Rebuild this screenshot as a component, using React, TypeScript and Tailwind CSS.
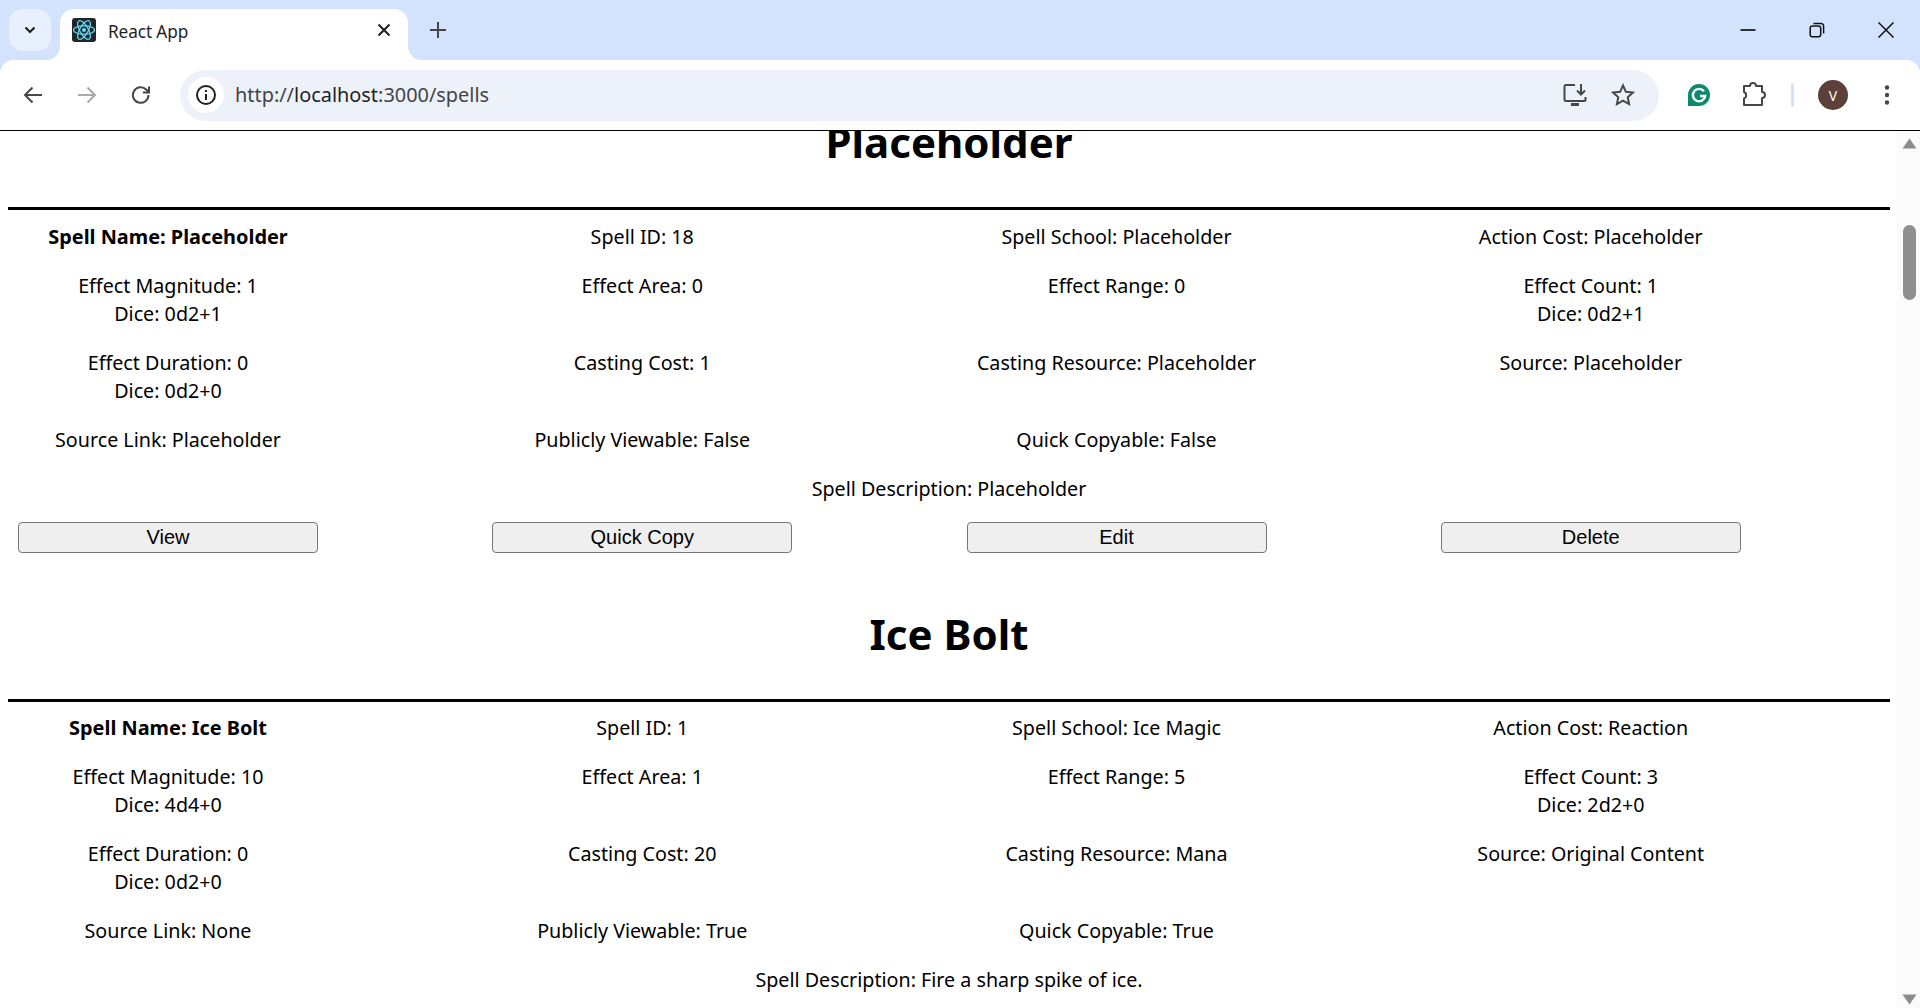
const spells = [
  {
    title: "Placeholder",
    rows: [
      [["Spell Name: Placeholder"], ["Spell ID: 18"], ["Spell School: Placeholder"], ["Action Cost: Placeholder"]],
      [["Effect Magnitude: 1", "Dice: 0d2+1"], ["Effect Area: 0"], ["Effect Range: 0"], ["Effect Count: 1", "Dice: 0d2+1"]],
      [["Effect Duration: 0", "Dice: 0d2+0"], ["Casting Cost: 1"], ["Casting Resource: Placeholder"], ["Source: Placeholder"]],
      [["Source Link: Placeholder"], ["Publicly Viewable: False"], ["Quick Copyable: False"], []],
    ],
    description: "Spell Description: Placeholder",
  },
  {
    title: "Ice Bolt",
    rows: [
      [["Spell Name: Ice Bolt"], ["Spell ID: 1"], ["Spell School: Ice Magic"], ["Action Cost: Reaction"]],
      [["Effect Magnitude: 10", "Dice: 4d4+0"], ["Effect Area: 1"], ["Effect Range: 5"], ["Effect Count: 3", "Dice: 2d2+0"]],
      [["Effect Duration: 0", "Dice: 0d2+0"], ["Casting Cost: 20"], ["Casting Resource: Mana"], ["Source: Original Content"]],
      [["Source Link: None"], ["Publicly Viewable: True"], ["Quick Copyable: True"], []],
    ],
    description: "Spell Description: Fire a sharp spike of ice.",
  },
];

function Spell({ spell }: { spell: (typeof spells)[number] }) {
  return (
    <section>
      <h1 className="text-center text-[42px] leading-[53px] font-bold mb-[39px] mr-[7px]">{spell.title}</h1>
      <div className="h-[3px] bg-black mr-[7px]" />
      <div className="mt-[12.5px] flex flex-col gap-[21px]">
        {spell.rows.map((row, r) => (
          <div key={r} className="grid grid-cols-[repeat(4,320px)] gap-x-[154.25px]">
            {row.map((lines, c) => (
              <div key={c} className={`text-center ${r === 0 && c === 0 ? "font-bold text-[19.9px]" : ""}`}>
                {lines.map((l) => (
                  <div key={l}>{l}</div>
                ))}
              </div>
            ))}
          </div>
        ))}
        <div className="text-center mr-[7px]">{spell.description}</div>
      </div>
      <div className="mt-[19.5px] mb-[53.7px] grid grid-cols-[repeat(4,320px)] gap-x-[154.25px]">
        {["View", "Quick Copy", "Edit", "Delete"].map((b) => (
          <div key={b} className="flex justify-center">
            <button className="w-[300px] h-[31px] pb-[2px] bg-[#efefef] border border-[#767676] rounded-[4px] text-[20px] leading-[26px] font-['Liberation_Sans',Arial,sans-serif]">
              {b}
            </button>
          </div>
        ))}
      </div>
    </section>
  );
}

function ReactFavicon() {
  return (
    <svg width="24" height="24" viewBox="0 0 24 24" className="shrink-0">
      <rect width="24" height="24" rx="3" fill="#222629" />
      <g fill="none" stroke="#61dafb" strokeWidth="1.2">
        <ellipse cx="12" cy="12" rx="10.5" ry="4.2" />
        <ellipse cx="12" cy="12" rx="10.5" ry="4.2" transform="rotate(60 12 12)" />
        <ellipse cx="12" cy="12" rx="10.5" ry="4.2" transform="rotate(120 12 12)" />
      </g>
      <circle cx="12" cy="12" r="2" fill="#61dafb" />
    </svg>
  );
}

function Chrome() {
  return (
    <header className="shrink-0 bg-[#d3e3fd] border-b border-black font-['Open_Sans',sans-serif]">
      <div className="h-[60px] flex items-end pl-[9px]">
        <div className="w-[42px] h-[42px] mb-[9px] rounded-[14px] bg-[#e9f0fd] flex items-center justify-center">
          <svg width="16" height="16" viewBox="0 0 16 16" fill="none" stroke="#1f1f1f" strokeWidth="2.2">
            <path d="M3.5 5.5 8 10l4.5-4.5" />
          </svg>
        </div>
        <div className="relative ml-[9px] w-[348px] h-[51px] bg-white rounded-t-[14px] flex items-center pl-[12px] pb-[9px]">
          <svg width="14" height="14" viewBox="0 0 14 14" className="absolute -left-[14px] bottom-0">
            <path d="M14 0v14H0C8 14 14 8 14 0z" fill="#fff" />
          </svg>
          <svg width="14" height="14" viewBox="0 0 14 14" className="absolute -right-[14px] bottom-0">
            <path d="M0 0v14h14C6 14 0 8 0 0z" fill="#fff" />
          </svg>
          <ReactFavicon />
          <span className="ml-[12px] text-[17.2px] text-[#1f1f1f] font-['Noto_Sans',sans-serif] tracking-[-0.1px] relative top-[2px]">React App</span>
          <svg width="14" height="14" viewBox="0 0 14 14" className="absolute right-[17px] top-[14px]" stroke="#1f1f1f" strokeWidth="2" fill="none">
            <path d="M1.5 1.5l11 11M12.5 1.5l-11 11" />
          </svg>
        </div>
        <svg width="16" height="16" viewBox="0 0 16 16" className="ml-[22px] mb-[22px]" stroke="#444746" strokeWidth="2" fill="none">
          <path d="M8 0v16M0 8h16" />
        </svg>
        <div className="ml-auto flex items-center mb-[22px] mr-[26px] gap-[53px]">
          <svg width="16" height="16" viewBox="0 0 16 16" stroke="#111" strokeWidth="1.7" fill="none">
            <path d="M0.5 8h15" />
          </svg>
          <svg width="16" height="16" viewBox="0 0 16 16" stroke="#111" strokeWidth="1.5" fill="none">
            <rect x="1.2" y="4" width="10.5" height="10.8" rx="2.2" />
            <path d="M4.5 1.4h7.5a2.6 2.6 0 0 1 2.6 2.6v7.5" />
          </svg>
          <svg width="16" height="16" viewBox="0 0 16 16" stroke="#111" strokeWidth="1.5" fill="none">
            <path d="M0.5 0.5l15 15M15.5 0.5l-15 15" />
          </svg>
        </div>
      </div>
      <div className="h-[70px] bg-white rounded-t-[14px] flex items-center pl-[22px] pr-[24px]">
        <svg width="22" height="22" viewBox="0 0 22 22" stroke="#474747" strokeWidth="2" fill="none">
          <path d="M20 11H3M10.5 3.5 3 11l7.5 7.5" />
        </svg>
        <svg width="22" height="22" viewBox="0 0 22 22" stroke="#a9a9a9" strokeWidth="2" fill="none" className="ml-[32px]">
          <path d="M2 11h17M11.5 3.5 19 11l-7.5 7.5" />
        </svg>
        <svg width="22" height="22" viewBox="0 0 22 22" stroke="#474747" strokeWidth="2" fill="none" className="ml-[32px]">
          <path d="M18.5 11a7.8 7.8 0 1 1-2.3-5.5L18.5 8" />
          <path d="M19 2.5V8.6h-6.1" />
        </svg>
        <div className="ml-[28px] w-[1479px] h-[51px] rounded-full bg-[#edf2fa] flex items-center pl-[8px] pr-[13px]">
          <div className="w-[36px] h-[36px] rounded-full bg-white flex items-center justify-center">
            <svg width="22" height="22" viewBox="0 0 22 22" fill="none" stroke="#1f1f1f" strokeWidth="2">
              <circle cx="11" cy="11" r="9" />
              <path d="M11 10v6M11 6v2" />
            </svg>
          </div>
          <span className="ml-[11px] text-[19.9px] text-[#444] font-['Noto_Sans',sans-serif]">
            http://<span className="text-[#1f1f1f]">localhost</span>:3000/spells
          </span>
          <svg width="26" height="26" viewBox="0 0 26 26" fill="none" stroke="#474747" strokeWidth="2" className="ml-auto">
            <path d="M13 3H4a1.5 1.5 0 0 0-1.5 1.5v13A1.5 1.5 0 0 0 4 19h18a1.5 1.5 0 0 0 1.5-1.5V15" />
            <path d="M19 2v10M15 8.5l4 4 4-4" />
            <path d="M9 22.5h8" strokeWidth="3" />
          </svg>
          <svg width="24" height="24" viewBox="0 0 24 24" fill="none" stroke="#474747" strokeWidth="2" className="ml-[23px] mr-[11px]">
            <path d="M12 2.5l2.9 6.3 6.9.8-5.1 4.7 1.4 6.8-6.1-3.4-6.1 3.4 1.4-6.8L2.2 9.6l6.9-.8z" />
          </svg>
        </div>
        <svg width="24" height="24" viewBox="0 0 24 24" className="ml-[28px]">
          <path d="M12 1a11 11 0 0 1 0 22H1V12A11 11 0 0 1 12 1z" fill="#0c8a6f" />
          <path d="M17 8.3A6.2 6.2 0 1 0 18.2 13H13" fill="none" stroke="#fff" strokeWidth="2.4" />
        </svg>
        <svg width="26" height="26" viewBox="0 0 26 26" fill="none" stroke="#474747" strokeWidth="2" className="ml-[30px]">
          <path d="M3 4h6a3 3 0 0 1 6 0h6v6a3 3 0 0 1 0 6v7H3v-6.5a3.5 3.5 0 0 0 0-6.5z" strokeLinejoin="round" />
        </svg>
        <div className="ml-[24px] w-[3px] h-[24px] rounded-sm bg-[#d3e3fd]" />
        <div className="ml-[24px] w-[30px] h-[30px] rounded-full bg-[#5d4037] text-white text-[14px] flex items-center justify-center font-['Noto_Sans',sans-serif]">
          V
        </div>
        <svg width="6" height="22" viewBox="0 0 6 22" fill="#474747" className="ml-[36px]">
          <circle cx="3" cy="3.5" r="2.2" />
          <circle cx="3" cy="11" r="2.2" />
          <circle cx="3" cy="18.5" r="2.2" />
        </svg>
      </div>
    </header>
  );
}

function Scrollbar() {
  return (
    <div className="w-[23px] shrink-0 bg-[#fbfbfb] flex flex-col items-center pt-[7px] pl-[1px]">
      <svg width="15" height="11" viewBox="0 0 15 11" fill="#8b8b8b">
        <path d="M7.5 0.5 14.5 10.5H0.5z" />
      </svg>
      <div className="mt-[76px] w-[13px] h-[75px] rounded-full bg-[#8f8f8f]" />
      <svg width="15" height="11" viewBox="0 0 15 11" fill="#8b8b8b" className="mt-auto mb-[3px]">
        <path d="M0.5 0.5H14.5L7.5 10.5z" />
      </svg>
    </div>
  );
}

export default function App() {
  return (
    <div className="h-[1008px] w-[1920px] overflow-hidden flex flex-col bg-white text-black">
      <Chrome />
      <div className="flex-1 min-h-0 flex">
        <main className="flex-1 min-w-0 overflow-hidden pl-[8px] font-['Noto_Sans',sans-serif] text-[19.7px] leading-[28px]">
          <div className="-mt-[16px]">
            {spells.map((s) => (
              <Spell key={s.title} spell={s} />
            ))}
          </div>
        </main>
        <Scrollbar />
      </div>
    </div>
  );
}
